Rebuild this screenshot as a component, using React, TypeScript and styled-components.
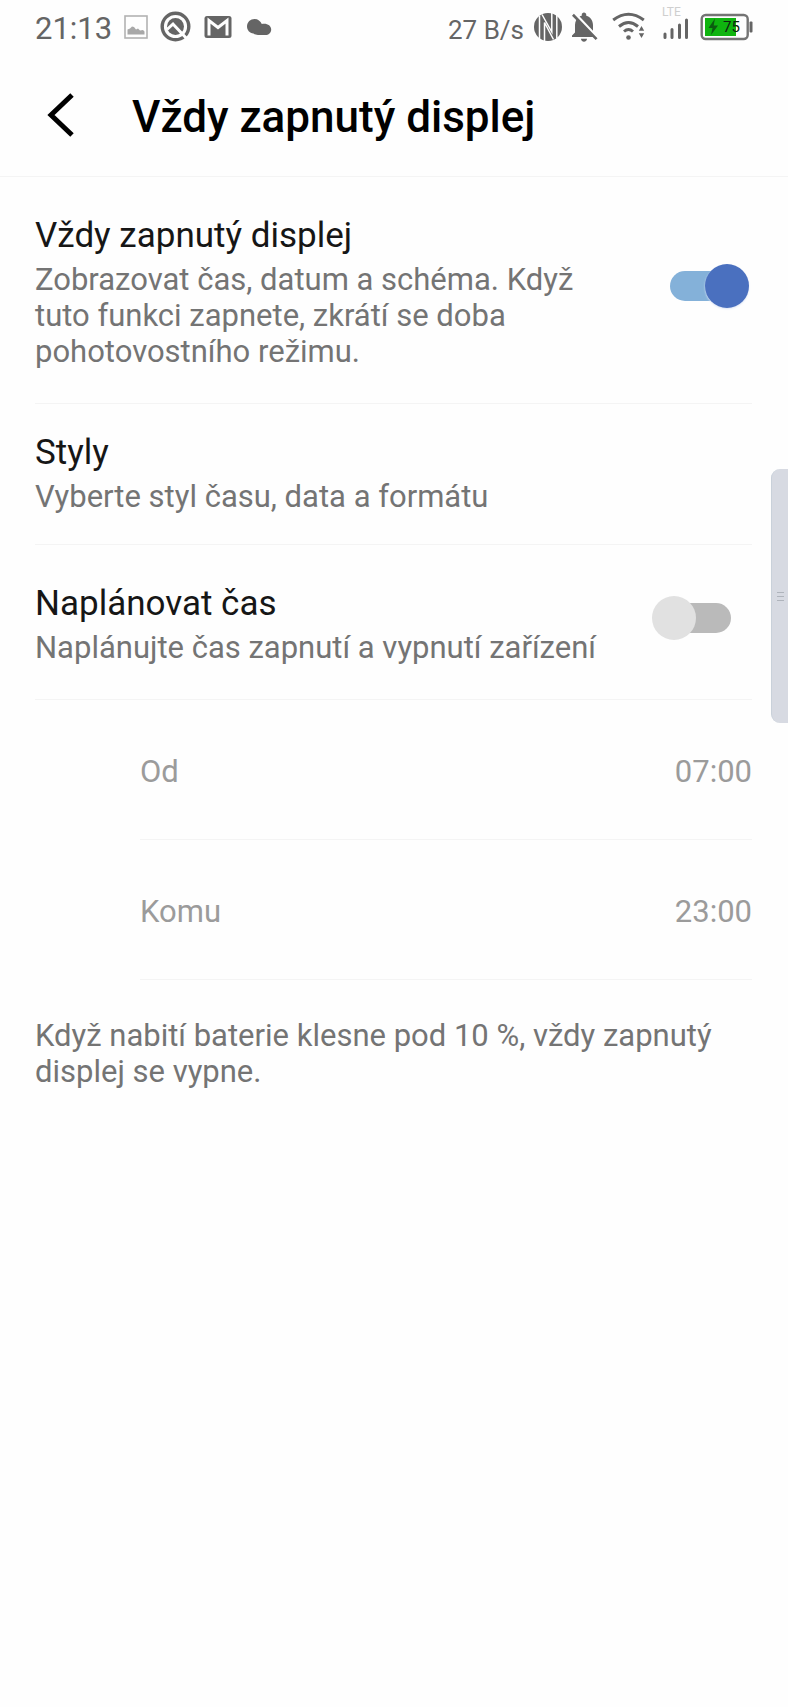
import React, { useState } from "react";
import styled, { createGlobalStyle } from "styled-components";

const GlobalStyle = createGlobalStyle`
  *, *::before, *::after { box-sizing: border-box; }
  html, body { margin: 0; background: #fefefe; }
  body { font-family: Roboto, "Noto Sans", sans-serif; color: #161616; }
`;

const Screen = styled.div`
  position: relative;
  min-height: 100vh;
  background: #fefefe;
`;

const StatusBar = styled.div`
  display: flex;
  align-items: center;
  justify-content: space-between;
  height: 56px;
  padding: 0 35px 2px;
  color: #656565;
`;

const StatusGroup = styled.div<{ $gap: number }>`
  display: flex;
  align-items: center;
  gap: ${(p) => p.$gap}px;

  svg { flex: none; }
`;

const Clock = styled.time`
  padding-top: 4px;
  font-size: 31px;
  line-height: 36px;
`;

const Speed = styled.span`
  padding-top: 6px;
  font-size: 26px;
  line-height: 36px;
`;

const Network = styled.div`
  display: flex;
  flex-direction: column;
  width: 27px;
  margin-bottom: 8px;
  font-size: 12px;
  line-height: 12px;
  color: #cfcfcf;
`;

const AppBar = styled.header`
  display: flex;
  align-items: center;
  height: 121px;
  padding: 0 35px;
  border-bottom: 1px solid #f4f4f4;
`;

const BackButton = styled.button`
  display: flex;
  width: 97px;
  padding: 0 0 0 12px;
  border: 0;
  background: none;
  color: #000;
`;

const PageTitle = styled.h1`
  margin: 0;
  padding-top: 2px;
  font-size: 44px;
  font-weight: 500;
  line-height: 52px;
  color: #000;
`;

const List = styled.main`
  padding: 0 36px 0 35px;
`;

const Row = styled.section<{ $compact?: boolean }>`
  display: flex;
  align-items: center;
  justify-content: space-between;
  padding: ${(p) => (p.$compact ? "27px 0 29px" : "37px 0 33px")};
  border-bottom: 1px solid #f4f4f4;
`;

const RowText = styled.div`
  display: flex;
  flex-direction: column;
  gap: 4px;
  max-width: 570px;
`;

const rowTitleStyle = `
  font-size: 35px;
  font-weight: 400;
  line-height: 44px;
  color: #161616;
`;

const RowLabel = styled.label`
  ${rowTitleStyle}
`;

const RowLink = styled.a`
  ${rowTitleStyle}
  text-decoration: none;
`;

const Description = styled.p`
  margin: 0;
  font-size: 31px;
  line-height: 36px;
  color: #747474;
`;

const Switch = styled.input`
  appearance: none;
  position: relative;
  flex: none;
  width: 97px;
  height: 44px;
  margin: 0 3px 12px 0;

  &::before {
    content: "";
    position: absolute;
    inset: 7px 18px;
    border-radius: 15px;
    background: #bababa;
  }
  &::after {
    content: "";
    position: absolute;
    top: 0;
    left: 0;
    width: 44px;
    height: 44px;
    border-radius: 50%;
    background: #e1e1e1;
  }
  &:checked::before { background: #84b1d9; }
  &:checked::after {
    left: auto;
    right: 0;
    background: #4a70bf;
    box-shadow: 0 1px 2px #dbe4f5;
  }
`;

const TimeButton = styled.button`
  display: flex;
  align-items: center;
  justify-content: space-between;
  width: calc(100% - 105px);
  height: 140px;
  margin-left: 105px;
  padding: 4px 0 0;
  border: 0;
  border-bottom: 1px solid #f4f4f4;
  background: none;
  font-family: inherit;
  font-size: 31px;
  line-height: 36px;
  color: #9b9b9b;
`;

const Footnote = styled(Description)`
  padding-top: 38px;
`;

const EdgeHandle = styled.div`
  position: absolute;
  top: 469px;
  right: 0;
  display: flex;
  flex-direction: column;
  align-items: center;
  justify-content: center;
  gap: 3px;
  width: 17px;
  height: 254px;
  border-left: 1px solid #c9d1da;
  border-radius: 9px 0 0 9px;
  background: #d7dae2;
`;

const GripLine = styled.span`
  width: 7px;
  height: 1px;
  background: #afb4bc;
`;

const PictureIcon = () => (
  <svg width="24" height="24" viewBox="0 0 24 24">
    <rect x="1" y="1" width="22" height="22" fill="none" stroke="#b2b2b2" strokeWidth="1.6" />
    <path d="M3.500 19.500v-5l2.500-1 2-2 2 .5 2 2.500 2-1 2 2 3-.5 1.500 1.500v3z" fill="#a8a8a8" />
  </svg>
);

const QIcon = () => (
  <svg width="32" height="32" viewBox="0 0 32 32" fill="none">
    <circle cx="15.500" cy="15.500" r="13.300" stroke="currentColor" strokeWidth="3.400" />
    <circle cx="15.500" cy="15.500" r="8.500" fill="currentColor" />
    <path d="M7 18.500L13 13L28 29" stroke="#fefefe" strokeWidth="3" />
  </svg>
);

const MailIcon = () => (
  <svg width="28" height="24" viewBox="0 0 28 24">
    <rect x="0.500" y="1" width="27" height="22" rx="2.500" fill="currentColor" />
    <path d="M5 20.500V5.500L14 12.500L23 5.500V20.500" fill="none" stroke="#fefefe" strokeWidth="3" />
  </svg>
);

const CloudIcon = () => (
  <svg width="28" height="18" viewBox="0 0 28 18" fill="currentColor">
    <path d="M9.500 15.500C5.500 15 3 12 3 8.500C3 4 6.500 1 10.500 1C14 1 16.500 3 17.800 6C23 5 27.200 7.500 27.200 11.500C27.200 15 24.500 17 21.500 17H14C12 17 10.500 16.300 9.500 15.500z" />
  </svg>
);

const NfcIcon = () => (
  <svg width="28" height="30" viewBox="0 0 28 30" fill="none">
    <circle cx="14" cy="15" r="14" fill="currentColor" />
    <path d="M5.500 27V3.500M22.800 26.500V3M10.500 30V10.500L19.500 27.500M8 2.500L17.800 20V0" stroke="#fefefe" strokeWidth="1.500" />
  </svg>
);

const BellOffIcon = () => (
  <svg width="30" height="30" viewBox="4 2.250 20 20" fill="currentColor">
    <path d="M20 18.690L7.840 6.140 5.270 3.490 4 4.760l2.800 2.800v.01c-.52.99-.8 2.160-.8 3.420v5l-2 2v1h13.730l2 2L21 19.720l-1-1.030zM12 22c1.110 0 2-.89 2-2h-4c0 1.110.89 2 2 2zM18 14.680V11c0-3.080-1.640-5.640-4.500-6.320V4c0-.83-.67-1.500-1.500-1.500s-1.500.67-1.500 1.500v.68c-.5.100-1 .300-1.430.550L18 14.680z" />
  </svg>
);

const WifiIcon = () => (
  <svg width="40" height="30" viewBox="0 0 40 30" fill="none" stroke="currentColor" strokeWidth="3">
    <path d="M1.200 8Q16.500 -3.500 31.800 8" />
    <path d="M7 14.500Q16.500 6.500 26 14.500" />
    <path d="M12 19.500Q16.500 15.500 21 19.500" />
    <circle cx="16.500" cy="25.500" r="2.300" fill="currentColor" stroke="none" />
    <path d="M29.500 14l2.700 4.700h-5.400zM29.500 26l2.700-4.700h-5.400z" fill="currentColor" stroke="none" />
  </svg>
);

const SignalIcon = () => (
  <svg width="27" height="22" viewBox="0 0 27 22" stroke="#656565" strokeWidth="3" strokeLinecap="round">
    <path d="M3 16v3.500M10 11.500v8M17.500 7v12.500M24.500 2v17.500" />
  </svg>
);

const BatteryIcon = () => (
  <svg width="54" height="28" viewBox="0 0 54 28">
    <rect x="2.700" y="2" width="46" height="24" rx="4" fill="none" stroke="#747474" strokeWidth="2.400" />
    <rect x="50.500" y="8.500" width="3" height="11" rx="1" fill="#656565" />
    <rect x="6" y="5" width="31" height="18" fill="#0fb40f" />
    <path d="M16 5.500L9.500 15H13.500L12 22L19 12.500H14.700z" fill="#0b5c10" />
    <text x="24" y="19" fontSize="15" fill="#10220f">75</text>
  </svg>
);

export default function App() {
  const [always, setAlways] = useState(true);
  const [scheduled, setScheduled] = useState(false);
  return (
    <Screen>
      <GlobalStyle />
      <StatusBar>
        <StatusGroup $gap={12}>
          <Clock>21:13</Clock>
          <PictureIcon />
          <QIcon />
          <MailIcon />
          <CloudIcon />
        </StatusGroup>
        <StatusGroup $gap={10}>
          <Speed>27 B/s</Speed>
          <NfcIcon />
          <BellOffIcon />
          <WifiIcon />
          <Network>
            LTE
            <SignalIcon />
          </Network>
          <BatteryIcon />
        </StatusGroup>
      </StatusBar>
      <AppBar>
        <BackButton aria-label="Zpět">
          <svg width="28" height="46" viewBox="0 0 28 46" fill="none" stroke="currentColor" strokeWidth="5">
            <path d="M25 2L4 22L25 42" />
          </svg>
        </BackButton>
        <PageTitle>Vždy zapnutý displej</PageTitle>
      </AppBar>
      <List>
        <Row>
          <RowText>
            <RowLabel htmlFor="always">Vždy zapnutý displej</RowLabel>
            <Description>Zobrazovat čas, datum a schéma. Když tuto funkci zapnete, zkrátí se doba pohotovostního režimu.</Description>
          </RowText>
          <Switch id="always" type="checkbox" checked={always} onChange={(e) => setAlways(e.target.checked)} />
        </Row>
        <Row $compact>
          <RowText>
            <RowLink href="#styly">Styly</RowLink>
            <Description>Vyberte styl času, data a formátu</Description>
          </RowText>
        </Row>
        <Row>
          <RowText>
            <RowLabel htmlFor="schedule">Naplánovat čas</RowLabel>
            <Description>Naplánujte čas zapnutí a vypnutí zařízení</Description>
          </RowText>
          <Switch id="schedule" type="checkbox" checked={scheduled} onChange={(e) => setScheduled(e.target.checked)} />
        </Row>
        <TimeButton disabled={!scheduled}><span>Od</span><span>07:00</span></TimeButton>
        <TimeButton disabled={!scheduled}><span>Komu</span><span>23:00</span></TimeButton>
        <Footnote>Když nabití baterie klesne pod 10 %, vždy zapnutý displej se vypne.</Footnote>
      </List>
      <EdgeHandle>
        <GripLine />
        <GripLine />
        <GripLine />
      </EdgeHandle>
    </Screen>
  );
}
